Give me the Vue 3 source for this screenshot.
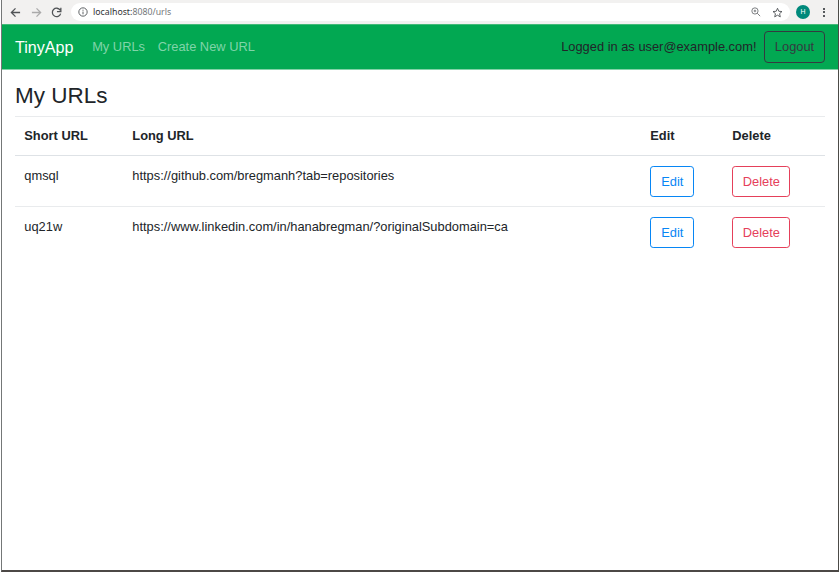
<script setup>
const rows = [
  { id: 'qmsql', url: 'https://github.com/bregmanh?tab=repositories' },
  { id: 'uq21w', url: 'https://www.linkedin.com/in/hanabregman/?originalSubdomain=ca' },
]
</script>

<template>
  <div class="window">
    <div class="toolbar">
      <svg class="nav-icon" viewBox="0 0 24 24"><path d="M22 12H3M12 3l-9 9 9 9" /></svg>
      <svg class="nav-icon muted" viewBox="0 0 24 24"><path d="M2 12h19M12 3l9 9-9 9" /></svg>
      <svg class="nav-icon" viewBox="0 0 24 24"><path d="M20 7A9.2 9.2 0 1 0 21 14.5M21.5 1.5v8.5H13" /></svg>
      <div class="address">
        <svg class="info" viewBox="0 0 24 24"><circle cx="12" cy="12" r="10" /><path d="M12 11v6.5M12 6.5v2.5" /></svg>
        <span class="host">localhost:<span class="path">8080/urls</span></span>
        <svg class="zoom" viewBox="0 0 24 24"><circle cx="9.5" cy="9.5" r="7.5" /><path d="M15 15l7 7M9.5 6.5v6M6.5 9.5h6" /></svg>
        <svg class="star" viewBox="0 0 24 24"><path d="M12 2.8l2.8 6.5 7 .6-5.3 4.7 1.6 6.9-6.1-3.7-6.1 3.7 1.6-6.9L2.2 9.9l7-.6z" /></svg>
      </div>
      <span class="avatar">H</span>
      <span class="dots"><i></i><i></i><i></i></span>
    </div>
    <nav class="navbar">
      <a class="brand">TinyApp</a>
      <a class="link">My URLs</a>
      <a class="link">Create New URL</a>
      <span class="user">Logged in as user@example.com!</span>
      <button class="btn dark">Logout</button>
    </nav>
    <main>
      <h3>My URLs</h3>
      <table>
        <colgroup><col class="c1"><col class="c2"><col class="c3"><col></colgroup>
        <thead>
          <tr><th>Short URL</th><th>Long URL</th><th>Edit</th><th>Delete</th></tr>
        </thead>
        <tbody>
          <tr v-for="row in rows" :key="row.id">
            <td>{{ row.id }}</td>
            <td>{{ row.url }}</td>
            <td><button class="btn blue">Edit</button></td>
            <td><button class="btn red">Delete</button></td>
          </tr>
        </tbody>
      </table>
    </main>
  </div>
</template>

<style>
body { background: #fff; overflow: hidden; }
</style>

<style scoped>
* { box-sizing: border-box; }
.window {
  width: 838px; height: 572px; margin-left: 1px;
  border-left: 1px solid #747777; border-right: 1px solid #4c4b48; border-bottom: 2px solid #4c4846;
  font: 12.87px/19.4px "Liberation Sans", Arial, sans-serif; color: #212529; background: #fff;
}
.toolbar { height: 24px; display: flex; align-items: center; background: #f2f1f0; padding-left: 8px; }
svg { fill: none; stroke: #505356; stroke-width: 2.8; flex: none; }
.nav-icon { width: 11px; height: 11px; margin-right: 9.7px; }
.nav-icon.muted { stroke: #aaa; }
.address {
  width: 719px; height: 18px; margin-left: -1px; border-radius: 9px; background: #fff;
  display: flex; align-items: center; padding: 0 7px;
}
.info { width: 10px; height: 10px; stroke-width: 2.2; }
.host { margin-left: 5px; font: 8.75px/18px "Noto Sans", sans-serif; color: #303236; flex: 1; }
.path { color: #74777a; }
.zoom { width: 10px; height: 10px; stroke-width: 2; stroke: #65686b; margin-right: 11px; }
.star { width: 11px; height: 11px; stroke-width: 2; }
.avatar {
  width: 14px; height: 14px; margin-left: 6px; border-radius: 50%; background: #00897b; color: #fff;
  font: 7px/14px Roboto, sans-serif; text-align: center;
}
.dots { display: flex; flex-direction: column; gap: 1.5px; margin-left: 13px; }
.dots i { width: 2px; height: 2px; background: #56595b; }
.navbar {
  height: 46px; display: flex; align-items: center; padding: 0 13px; background: #02a852;
  border-top: 1px solid #43ba78; border-bottom: 1px solid #83d2a8;
}
.brand { color: #fff; font-size: 16.1px; margin: 1px 18.7px 0 0; }
.link { color: #80d4a9; margin-right: 12.7px; }
.user { margin-left: auto; margin-right: 7.5px; }
.btn {
  display: block; height: 31px; padding: 0; border: 1px solid; border-radius: 3.2px;
  background: transparent; font: inherit; white-space: nowrap;
}
.dark { color: #343a40; height: 32px; width: 61px; border-radius: 4px; }
.blue { color: #0786f5; width: 44px; }
.red { color: #e5405a; width: 58px; }
main { padding: 12px 13px 0; }
h3 { margin: 0; height: 34px; font-size: 22.5px; line-height: 28px; font-weight: 400; }
table { width: 810px; table-layout: fixed; border-collapse: separate; border-spacing: 0; }
.c1 { width: 108px; }
.c2 { width: 518px; }
.c3 { width: 82px; }
th { height: 40px; padding: 0 9.3px; text-align: left; border-top: 1px solid #e9ebed; border-bottom: 1px solid #dee2e6; }
td { height: 51px; padding: 10px 9.3px 9px; vertical-align: top; border-bottom: 1px solid #e9ebed; }
tbody tr:last-child td { border-bottom: 0; }
</style>
